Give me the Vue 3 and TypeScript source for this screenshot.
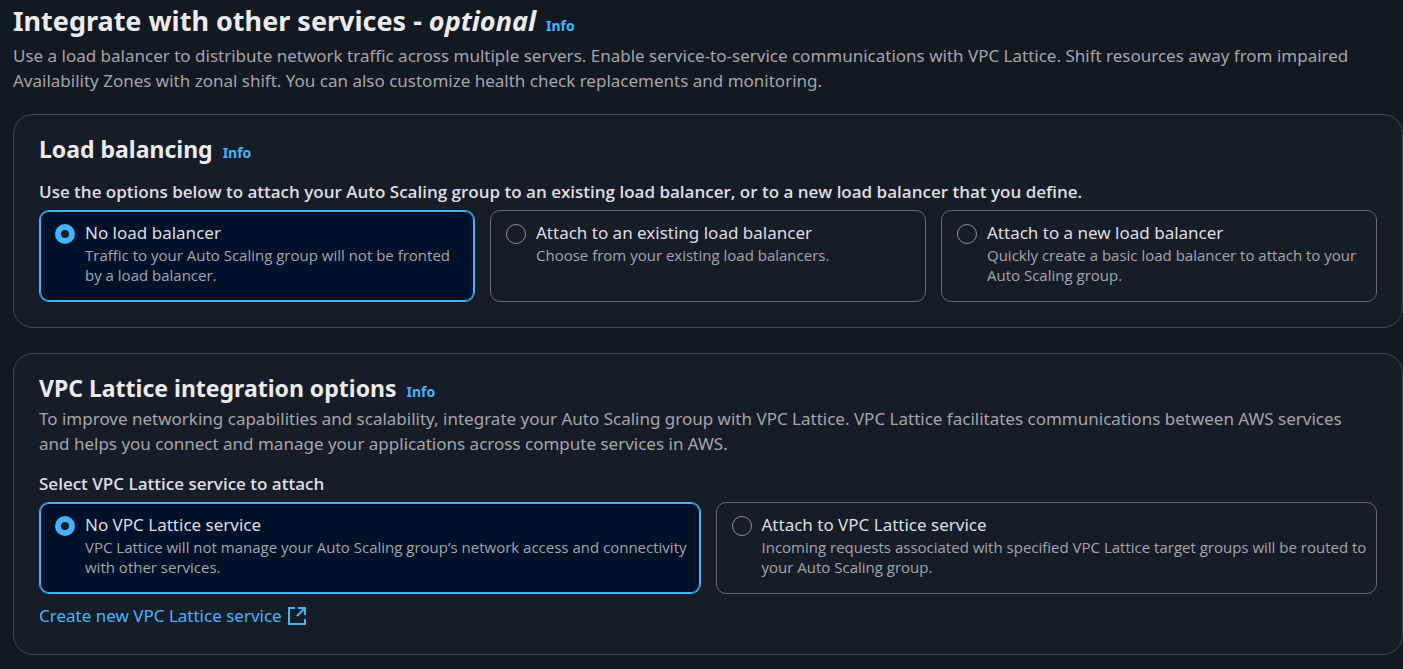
<script setup lang="ts">
import { ref } from 'vue'

interface Option {
  value: string
  label: string
  description: string
}

const balancerOptions: Option[] = [
  {
    value: 'none',
    label: 'No load balancer',
    description: 'Traffic to your Auto Scaling group will not be fronted by a load balancer.',
  },
  {
    value: 'existing',
    label: 'Attach to an existing load balancer',
    description: 'Choose from your existing load balancers.',
  },
  {
    value: 'new',
    label: 'Attach to a new load balancer',
    description: 'Quickly create a basic load balancer to attach to your Auto Scaling group.',
  },
]

const latticeOptions: Option[] = [
  {
    value: 'none',
    label: 'No VPC Lattice service',
    description:
      'VPC Lattice will not manage your Auto Scaling group’s network access and connectivity with other services.',
  },
  {
    value: 'attach',
    label: 'Attach to VPC Lattice service',
    description:
      'Incoming requests associated with specified VPC Lattice target groups will be routed to your Auto Scaling group.',
  },
]

const balancer = ref('none')
const lattice = ref('none')
</script>

<template>
  <main class="page">
    <header class="page-header">
      <div class="heading">
        <h1>Integrate with other services - <em>optional</em></h1>
        <a class="info" href="#">Info</a>
      </div>
      <p class="description">
        Use a load balancer to distribute network traffic across multiple servers. Enable service-to-service
        communications with VPC Lattice. Shift resources away from impaired Availability Zones with zonal shift. You can
        also customize health check replacements and monitoring.
      </p>
    </header>

    <section class="card">
      <div class="heading">
        <h2>Load balancing</h2>
        <a class="info" href="#">Info</a>
      </div>
      <fieldset>
        <legend>
          Use the options below to attach your Auto Scaling group to an existing load balancer, or to a new load
          balancer that you define.
        </legend>
        <div class="tiles">
          <label
            v-for="option in balancerOptions"
            :key="option.value"
            class="tile"
            :class="{ selected: balancer === option.value }"
          >
            <input v-model="balancer" type="radio" name="balancer" :value="option.value" />
            <span class="tile-text">
              <span class="tile-label">{{ option.label }}</span>
              <span class="tile-description">{{ option.description }}</span>
            </span>
          </label>
        </div>
      </fieldset>
    </section>

    <section class="card">
      <div class="heading">
        <h2>VPC Lattice integration options</h2>
        <a class="info" href="#">Info</a>
      </div>
      <p class="description">
        To improve networking capabilities and scalability, integrate your Auto Scaling group with VPC Lattice. VPC
        Lattice facilitates communications between AWS services and helps you connect and manage your applications
        across compute services in AWS.
      </p>
      <fieldset>
        <legend>Select VPC Lattice service to attach</legend>
        <div class="tiles">
          <label
            v-for="option in latticeOptions"
            :key="option.value"
            class="tile"
            :class="{ selected: lattice === option.value }"
          >
            <input v-model="lattice" type="radio" name="lattice" :value="option.value" />
            <span class="tile-text">
              <span class="tile-label">{{ option.label }}</span>
              <span class="tile-description">{{ option.description }}</span>
            </span>
          </label>
        </div>
      </fieldset>
      <a class="create-link" href="#">
        Create new VPC Lattice service
        <svg viewBox="0 0 18 18" width="18" height="18" fill="none" stroke="currentColor" stroke-width="2" aria-hidden="true">
          <path d="M7 1H1v16h16v-5" />
          <path d="M10 1h7v7M17 1 9 9" />
        </svg>
      </a>
    </section>
  </main>
</template>

<style>
body {
  margin: 0;
  background: #131920;
}
</style>

<style scoped>
.page {
  display: flex;
  flex-direction: column;
  gap: 25px;
  padding: 4px 0 14px 13px;
  background: #131920;
  color: #dedee3;
  font-family: 'Noto Sans', 'Open Sans', sans-serif;
  font-size: 17px;
  line-height: 25px;
}

.page-header {
  margin-bottom: -4px;
}

.heading {
  display: flex;
  align-items: baseline;
  gap: 10px;
}

h1,
h2 {
  margin: 0;
  color: #ebebf0;
  font-weight: 700;
}

h1 {
  font-size: 27px;
  line-height: 33px;
}

h2 {
  font-size: 23px;
  line-height: 30px;
}

.info {
  color: #42b4ff;
  font-size: 14px;
  font-weight: 700;
  line-height: 20px;
  text-decoration: none;
}

.description {
  margin: 6px 0 0;
  color: #a4a4ad;
}

.page-header .description {
  padding-right: 40px;
}

.card {
  padding: 19px 25px 25px;
  border: 1px solid #424650;
  border-radius: 20px;
  background: #171d26;
}

.card .description {
  margin-top: 3px;
  padding-right: 25px;
}

fieldset {
  min-width: 0;
  margin: 15px 0 0;
  padding: 0;
  border: 0;
}

legend {
  padding: 0 0 6px;
  font-family: 'Open Sans', 'Noto Sans', sans-serif;
  font-weight: 600;
}

.tiles {
  display: flex;
  gap: 15px;
}

.tile {
  display: flex;
  flex: 1 1 0;
  gap: 10px;
  padding: 9px 6px 16px 15px;
  border: 1px solid #656871;
  border-radius: 10px;
}

.tile.selected {
  border-color: #42b4ff;
  background: #001129;
  box-shadow: inset 0 0 0 1px #42b4ff;
}

.tile input {
  flex: none;
  box-sizing: border-box;
  width: 20px;
  height: 20px;
  margin: 4px 0 0;
  border: 1px solid #8c8c94;
  border-radius: 50%;
  background: #161d26;
  appearance: none;
}

.tile input:checked {
  border: 6px solid #42b4ff;
}

.tile-text {
  display: flex;
  flex-direction: column;
}

.tile-description {
  color: #a4a4ad;
  font-family: 'Open Sans', 'Noto Sans', sans-serif;
  font-size: 15px;
  line-height: 20px;
}

.create-link {
  display: inline-flex;
  align-items: center;
  gap: 6px;
  margin-top: 9px;
  margin-bottom: 1px;
  color: #42b4ff;
  text-decoration: none;
}
</style>
